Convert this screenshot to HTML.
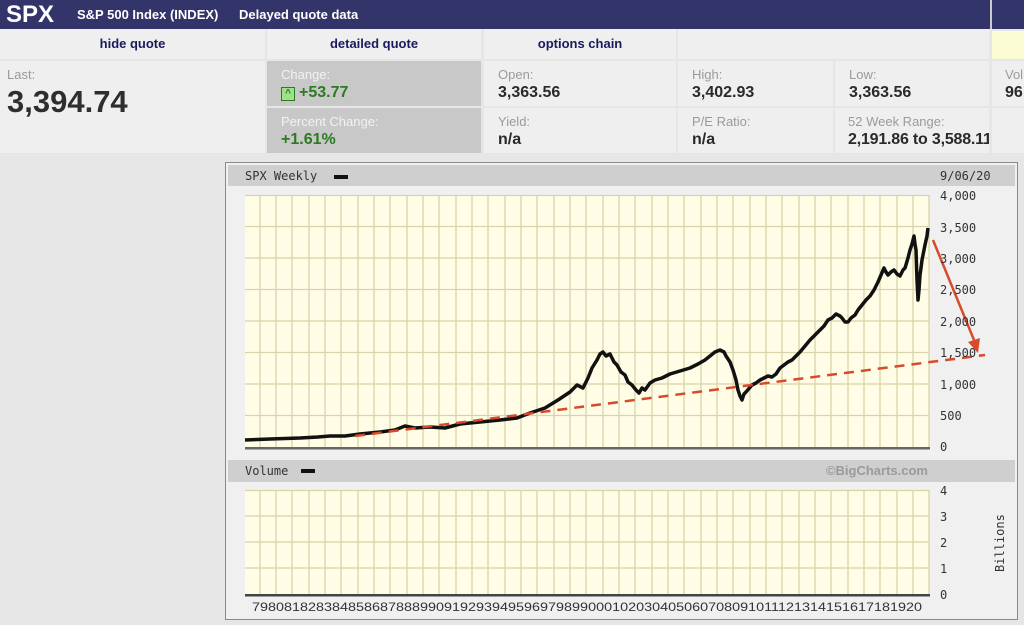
<!DOCTYPE html>
<html><head><meta charset="utf-8"><style>
body{margin:0;width:1024px;height:625px;background:#e6e6e6;font-family:"Liberation Sans",Arial,sans-serif;position:relative;overflow:hidden}
.a{position:absolute;box-sizing:border-box}
.nav{color:#1a1a5e;font-weight:bold;font-size:13px;text-align:center;line-height:30px;background:#efefef}
.cell{background:#efefef;padding:6px 0 0 14px;white-space:nowrap;overflow:hidden}
.lab{color:#9a9a9a;font-size:13px}
.val{color:#2a2a2a;font-weight:bold;font-size:16px;margin-top:2px}
.mono{font-family:"DejaVu Sans Mono","Liberation Mono",monospace;font-size:12px;fill:#333}
</style></head><body>
<div class="a" style="left:0;top:0;width:1024px;height:29px;background:#33346a"></div>
<div class="a" style="left:990px;top:0;width:2px;height:29px;background:#ccc"></div>
<div class="a" style="left:6px;top:1px;color:#fff;font-weight:bold;font-size:24px">SPX</div>
<div class="a" style="left:77px;top:7px;color:#fff;font-weight:bold;font-size:13px">S&amp;P 500 Index (INDEX)</div>
<div class="a" style="left:239px;top:7px;color:#fff;font-weight:bold;font-size:13px">Delayed quote data</div>
<div class="a nav" style="left:0;top:29px;width:265px;height:30px">hide quote</div>
<div class="a nav" style="left:267px;top:29px;width:214px;height:30px">detailed quote</div>
<div class="a nav" style="left:484px;top:29px;width:192px;height:30px">options chain</div>
<div class="a nav" style="left:678px;top:29px;width:311px;height:30px"></div>
<div class="a" style="left:992px;top:31px;width:32px;height:28px;background:#fcfcd4"></div>
<div class="a cell" style="left:0;top:61px;width:265px;height:92px;padding-left:7px"><div class="lab">Last:</div><div style="font-size:31px;font-weight:bold;color:#2e2e2e;margin-top:2px">3,394.74</div></div>
<div class="a cell" style="left:267px;top:61px;width:214px;height:45px;background:#c8c8c8"><div class="lab" style="color:#f2f2f2">Change:</div><div class="val" style="color:#2c7a22"><span style="display:inline-block;width:12px;height:12px;border:1px solid #2c7a22;background:#9de28a;font-size:10px;line-height:12px;text-align:center;vertical-align:1px;margin-right:4px">^</span>+53.77</div></div>
<div class="a cell" style="left:267px;top:108px;width:214px;height:45px;background:#c8c8c8"><div class="lab" style="color:#f2f2f2">Percent Change:</div><div class="val" style="color:#2c7a22">+1.61%</div></div>
<div class="a cell" style="left:484px;top:61px;width:192px;height:45px"><div class="lab">Open:</div><div class="val">3,363.56</div></div>
<div class="a cell" style="left:484px;top:108px;width:192px;height:45px"><div class="lab">Yield:</div><div class="val">n/a</div></div>
<div class="a cell" style="left:678px;top:61px;width:155px;height:45px"><div class="lab">High:</div><div class="val">3,402.93</div></div>
<div class="a cell" style="left:678px;top:108px;width:155px;height:45px"><div class="lab">P/E Ratio:</div><div class="val">n/a</div></div>
<div class="a cell" style="left:835px;top:61px;width:154px;height:45px"><div class="lab">Low:</div><div class="val">3,363.56</div></div>
<div class="a cell" style="left:835px;top:108px;width:154px;height:45px;padding-left:13px"><div class="lab">52 Week Range:</div><div class="val" style="letter-spacing:-0.2px">2,191.86 to 3,588.11</div></div>
<div class="a cell" style="left:992px;top:61px;width:40px;height:45px;padding-left:13px"><div class="lab">Vol</div><div class="val">96</div></div>
<div class="a" style="left:992px;top:108px;width:32px;height:45px;background:#efefef"></div>
<div class="a" style="left:0;top:155px;width:1024px;height:470px;background:#e6e6e6"></div>

<svg class="a" style="left:0;top:0" width="1024" height="625">
<rect x="225.5" y="162.5" width="792" height="457" fill="#f0f0f0" stroke="#8a8a8a"/>
<rect x="228" y="165" width="787" height="21" fill="#cfcfcf"/>
<rect x="228" y="460" width="787" height="22" fill="#cfcfcf"/>
<text x="245" y="180" class="mono">SPX Weekly</text>
<rect x="334" y="175" width="14" height="4" fill="#111"/>
<text x="940" y="180" class="mono">9/06/20</text>
<text x="245" y="475" class="mono">Volume</text>
<rect x="301" y="469" width="14" height="4" fill="#111"/>
<text x="928" y="475" font-family="Liberation Sans" font-weight="bold" font-size="13" fill="#9a9a9a" text-anchor="end">©BigCharts.com</text>
<rect x="245" y="195" width="684" height="252" fill="#fffde6"/>
<rect x="245" y="490" width="684" height="104" fill="#fffde6"/>
<g stroke="#d8d3a8" stroke-width="1.3">
<path d="M245 226.5H929M245 258H929M245 289.5H929M245 321H929M245 352.5H929M245 384H929M245 415.5H929M245 195.5H929"/>
<path d="M245 516H929M245 542H929M245 568H929M245 490.5H929"/>
<path id="vg" d="M260 195V447M276 195V447M292 195V447M309 195V447M325 195V447M341 195V447M358 195V447M374 195V447M390 195V447M407 195V447M423 195V447M439 195V447M456 195V447M472 195V447M488 195V447M505 195V447M521 195V447M537 195V447M554 195V447M570 195V447M586 195V447M603 195V447M619 195V447M635 195V447M652 195V447M668 195V447M684 195V447M701 195V447M717 195V447M733 195V447M750 195V447M766 195V447M782 195V447M799 195V447M815 195V447M831 195V447M848 195V447M864 195V447M880 195V447M897 195V447M913 195V447M929 195V447"/>
<use href="#vg" transform="translate(0,490) scale(1,0.4127) translate(0,-195)"/>
</g>
<rect x="245" y="447" width="685" height="2.5" fill="#666"/>
<rect x="245" y="594" width="685" height="2.5" fill="#444"/>
<path d="M245 440L270 439L300 438L318 437L330 436L345 436L360 434L380 432L395 430L405 426L415 428L430 427L445 428L460 424L480 422L500 420L517 418L530 413L545 408L558 400L570 392L577 385L583 388L588 378L592 368L597 360L600 354L603 352L606 356L610 354L614 362L617 365L621 372L625 375L628 382L632 385L636 390L639 393L642 388L645 390L650 383L655 380L662 378L670 374L680 371L690 368L698 364L705 360L710 356L715 352L720 350L724 352L726 356L730 362L733 370L736 380L738 390L740 396L742 400L744 394L746 392L752 385L756 383L760 380L764 378L768 376L772 377L776 374L780 368L784 365L788 362L792 360L796 356L800 352L805 346L810 340L815 335L820 330L824 326L828 320L832 318L836 314L840 316L842 318L845 322L848 322L851 318L855 315L858 310L862 305L866 300L870 296L874 290L878 282L881 275L884 268L886 272L888 275L891 272L894 270L897 274L900 276L903 270L905 268L908 258L910 250L912 244L914 236L915 244L916 250L917 280L918 300L919 290L920 275L921 268L922 260L924 250L925 245L927 236L928 228" fill="none" stroke="#111" stroke-width="3.5" stroke-linejoin="round"/>
<path d="M355 436L985 355" stroke="#d84a2c" stroke-width="2.5" stroke-dasharray="10,7" fill="none"/>
<path d="M933 240L974 340" stroke="#d84a2c" stroke-width="2.5"/>
<path d="M968 342L978 353L980 338Z" fill="#d84a2c"/>
<g class="mono" font-size="13" fill="#333">
<text x="940" y="200">4,000</text><text x="940" y="232">3,500</text><text x="940" y="263">3,000</text><text x="940" y="294">2,500</text><text x="940" y="326">2,000</text><text x="940" y="357">1,500</text><text x="940" y="389">1,000</text><text x="940" y="420">500</text><text x="940" y="451">0</text>
<text x="940" y="495">4</text><text x="940" y="521">3</text><text x="940" y="547">2</text><text x="940" y="573">1</text><text x="940" y="599">0</text>
</g>
<text transform="translate(1004,572) rotate(-90)" class="mono">Billions</text>
<text x="252" y="611" font-family="Liberation Sans Narrow,Liberation Sans" font-size="12" fill="#333" textLength="670" lengthAdjust="spacingAndGlyphs">798081828384858687888990919293949596979899000102030405060708091011121314151617181920</text>
</svg>
</body></html>
